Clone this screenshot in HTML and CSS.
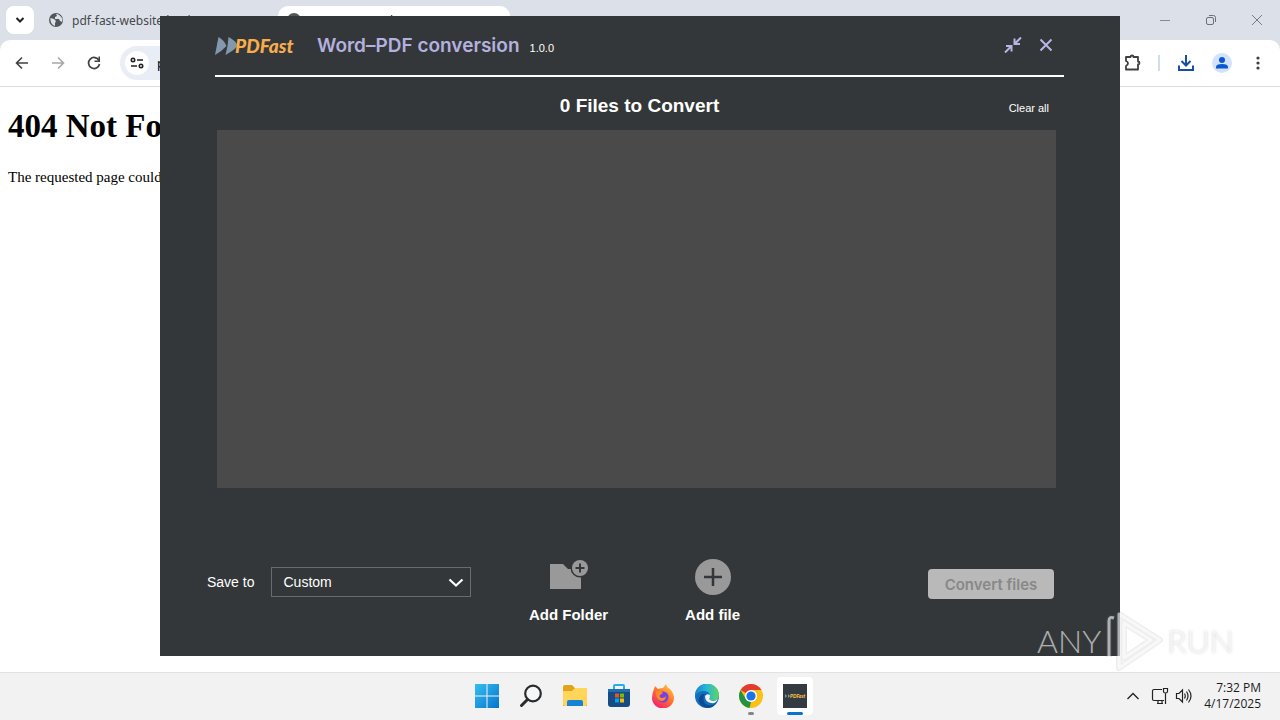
FILE: index.html
```html
<!DOCTYPE html>
<html lang="en">
<head>
<meta charset="utf-8">
<title>Word–PDF conversion</title>
<link rel="stylesheet" href="styles.css">
</head>
<body>
<div class="desktop">
  <div class="browser">
    <div class="tabstrip">
      <button class="tab-search" aria-label="Search tabs"><svg width="10" height="8" viewBox="0 0 10 8"><path d="M1.500 2 5 5.500 8.500 2" fill="none" stroke="#222" stroke-width="2"/></svg></button>
      <div class="tab">
        <svg width="16" height="16" viewBox="0 0 16 16"><circle cx="8" cy="8" r="7" fill="#51565b"/><path d="M2.500 6 6 7l2 2-1 2v3C4 13 2 10 2.500 6ZM8 2l1 2-2 1v2h4l1 2 2 1 .5-3C13 4 11 2 8 2Z" fill="#dce1e9"/></svg>
        <span>pdf-fast-website.b-cdn.net</span>
      </div>
      <div class="tab tab-active">
        <svg width="16" height="16" viewBox="0 0 16 16"><circle cx="8" cy="8" r="7" fill="#51565b"/></svg>
        <span>404 Not Found</span>
      </div>
      <div class="window-buttons">
        <button aria-label="Minimize"><svg width="12" height="12" viewBox="0 0 12 12"><path d="M1 6.500h10" stroke="#858a90"/></svg></button>
        <button aria-label="Restore"><svg width="12" height="12" viewBox="0 0 12 12" fill="none" stroke="#6d7176"><rect x="1.500" y="3.500" width="7" height="7" rx="1.500"/><path d="M4 1.500h4.500a2 2 0 0 1 2 2V8"/></svg></button>
        <button aria-label="Close browser"><svg width="12" height="12" viewBox="0 0 12 12"><path d="m1 1 10 10M11 1 1 11" stroke="#777b80"/></svg></button>
      </div>
    </div>
    <div class="toolbar">
      <button aria-label="Back"><svg width="14" height="14" viewBox="0 0 14 14"><path d="M13 7H2M7 1.500 1.500 7 7 12.500" fill="none" stroke="#3f4144" stroke-width="1.600"/></svg></button>
      <button aria-label="Forward"><svg width="14" height="14" viewBox="0 0 14 14"><path d="M1 7h11M7 1.500 12.500 7 7 12.500" fill="none" stroke="#a5a7aa" stroke-width="1.600"/></svg></button>
      <button aria-label="Reload"><svg width="14" height="14" viewBox="0 0 14 14"><path d="M12 4.500A5.500 5.500 0 1 0 12.500 8" fill="none" stroke="#3f4144" stroke-width="1.700"/><path d="M13 .5V6H7.500V4.500h4V.5Z" fill="#3f4144"/></svg></button>
      <div class="address">
        <button class="site-info" aria-label="Site information"><svg width="14" height="12" viewBox="0 0 14 12" fill="none" stroke="#202124" stroke-width="1.600"><circle cx="3" cy="3" r="1.700"/><path d="M7 3h6M1 9h6"/><circle cx="11" cy="9" r="1.700"/></svg></button>
        <input class="url" type="text" aria-label="Address" value="pdf-fast-website.b-cdn.net">
      </div>
      <div class="toolbar-actions">
        <button aria-label="Extensions"><svg width="18" height="18" viewBox="0 0 18 18"><path d="M3 3H7.500Q7.500 1.500 9 1.500T10.500 3H15V7.500Q16.500 7.500 16.500 9T15 10.500V15.500H3V12Q5 11 5 9.300T3 7Z" fill="none" stroke="#3c3e41" stroke-width="1.800" stroke-linejoin="round"/></svg></button>
        <span class="divider"></span>
        <button aria-label="Downloads"><svg width="18" height="18" viewBox="0 0 18 18"><path d="M9 1v10M4.500 7 9 11.500 13.500 7M2 11.500V16h14v-4.500" fill="none" stroke="#174ea6" stroke-width="2"/></svg></button>
        <button aria-label="Profile"><svg width="20" height="20" viewBox="0 0 20 20"><circle cx="10" cy="10" r="10" fill="#d3e3fd"/><circle cx="10" cy="7" r="3" fill="#0b57d0"/><path d="M4 15.500V14q0-3 6-3t6 3v1.500Z" fill="#0b57d0"/></svg></button>
        <button aria-label="Menu"><svg width="18" height="18" viewBox="0 0 18 18" fill="#3c3e41"><circle cx="9" cy="4" r="1.600"/><circle cx="9" cy="9" r="1.600"/><circle cx="9" cy="14" r="1.600"/></svg></button>
      </div>
    </div>
    <main class="page">
      <h1>404 Not Found</h1>
      <p>The requested page could not be found.</p>
    </main>
  </div>

  <section class="dialog" aria-label="Word–PDF conversion">
    <header class="dialog-header">
      <div class="logo"><svg width="24" height="18" viewBox="0 0 24 18" fill="#8198ad"><path d="M3.500 0Q9 3 11.500 9 7 14 0 18Z"/><path d="M13.500 0Q20 3 23 9 18 14 10.500 18L12.500 9Z"/></svg><span>PDFast</span></div>
      <h2>Word–PDF conversion</h2>
      <span class="version">1.0.0</span>
      <div class="dialog-buttons">
        <button aria-label="Shrink"><svg width="18" height="16" viewBox="0 0 18 16" fill="none" stroke="#b8b4e4" stroke-width="2"><path d="M17 .5 11 6.500M10.500 1.500V7H16M1 15.500 7 9.500M2 9h5.500v5.500"/></svg></button>
        <button aria-label="Close"><svg width="14" height="14" viewBox="0 0 14 14"><path d="m1.500 1.500 11 11M12.500 1.500l-11 11" stroke="#b8b4e4" stroke-width="2"/></svg></button>
      </div>
    </header>
    <div class="list-head">
      <h3>0 Files to Convert</h3>
      <button class="clear">Clear all</button>
    </div>
    <div class="file-list"></div>
    <footer class="dialog-footer">
      <div class="save">
        <label for="save-to">Save to</label>
        <div class="select-wrap">
          <select id="save-to"><option>Custom</option></select>
          <svg class="chevron" width="16" height="10" viewBox="0 0 16 10"><path d="m1.500 1.500 6.500 6 6.500-6" fill="none" stroke="#fff" stroke-width="2.200"/></svg>
        </div>
      </div>
      <div class="adders">
        <button class="adder"><svg width="42" height="36" viewBox="0 0 42 36"><path d="M3 5h13l5 5h3l5 7h5v13H3Z" fill="#999"/><circle cx="33" cy="9" r="9.500" fill="#343739"/><circle cx="33" cy="9" r="8" fill="#999"/><path d="M33 4.500v9M28.500 9h9" stroke="#343739" stroke-width="2"/></svg><span>Add Folder</span></button>
        <button class="adder"><svg width="36" height="36" viewBox="0 0 36 36"><circle cx="18" cy="18" r="18" fill="#999"/><path d="M18 9v18M9 18h18" stroke="#343739" stroke-width="2.500"/></svg><span>Add file</span></button>
      </div>
      <button class="convert" disabled>Convert files</button>
    </footer>
  </section>

  <nav class="taskbar" aria-label="Taskbar">
    <div class="apps">
      <button aria-label="Start"><svg width="24" height="24" viewBox="0 0 24 24"><defs><linearGradient id="win" x2="1" y2="1"><stop stop-color="#35bff2"/><stop offset="1" stop-color="#0873cc"/></linearGradient></defs><path d="M0 0h11.500v11.500H0ZM12.500 0H24v11.500H12.500ZM0 12.500h11.500V24H0ZM12.500 12.500H24V24H12.500Z" fill="url(#win)"/></svg></button>
      <button aria-label="Search"><svg width="24" height="24" viewBox="0 0 24 24"><circle cx="14" cy="9.500" r="7.800" fill="#f5f7f8" stroke="#2b2b2b" stroke-width="2.200"/><path d="m8.500 15.500-6 6" stroke="#2b2b2b" stroke-width="3" stroke-linecap="round"/></svg></button>
      <button aria-label="File Explorer"><svg width="24" height="24" viewBox="0 0 24 24"><path d="M0 3q0-2 2-2h7l3 3h10q2 0 2 2v16H0Z" fill="#e2a31b"/><path d="M0 7h9l3-3h10q2 0 2 2v14q0 2-2 2H2q-2 0-2-2Z" fill="#ffd65a"/><path d="M4 22v-4q0-2 2-2h12q2 0 2 2v4Z" fill="#1683d8"/></svg></button>
      <button aria-label="Store"><svg width="24" height="24" viewBox="0 0 24 24"><path d="M7 6V2q0-1 1-1h8q1 0 1 1v4" fill="none" stroke="#2baee8" stroke-width="2"/><path d="M1 5h22v15q0 3-3 3H4q-3 0-3-3Z" fill="#164b83"/><path d="M1 5h22v3H1Z" fill="#1b6fb4"/><path d="M8 9.500h4v4H8Z" fill="#f25022"/><path d="M13 9.500h4v4h-4Z" fill="#7fba00"/><path d="M8 14.500h4v4H8Z" fill="#00a4ef"/><path d="M13 14.500h4v4h-4Z" fill="#ffb900"/></svg></button>
      <button aria-label="Firefox"><svg width="24" height="24" viewBox="0 0 24 24"><defs><linearGradient id="fox" x1="1" y1="0" x2=".3" y2="1"><stop stop-color="#ffe14a"/><stop offset=".5" stop-color="#ff7a2c"/><stop offset="1" stop-color="#f5216b"/></linearGradient></defs><path d="M3 5 4 2l3 3q3-1 5-1l3-4q1 4 4 5 4 4 4 9a11 10.500 0 0 1-22 0Q1 9 3 5Z" fill="url(#fox)"/><circle cx="12" cy="13" r="5.500" fill="#7542e5"/><path d="M5 8q4-2 7 1l-3 2q-1 3 2 3 3 0 4-2 0 5-5 5-5-1-5-9Z" fill="#ff8b27"/></svg></button>
      <button aria-label="Edge"><svg width="24" height="24" viewBox="0 0 24 24"><defs><linearGradient id="edge" x2="1" y2="0"><stop stop-color="#1686d0"/><stop offset=".5" stop-color="#27b8d6"/><stop offset="1" stop-color="#62d65a"/></linearGradient></defs><circle cx="12" cy="12" r="12" fill="#126fc0"/><path d="M0 12a12 12 0 0 1 24-1c0 5-5 7-9 5-2-1 0-2 0-5C14 6 4 5 0 12Z" fill="url(#edge)"/><path d="M9 11q-2 8 4 10 5 1 8-2-4 7-12 4Q0 18 6 11q2-2 5-1Z" fill="#0c4b94"/><path d="M10 12q2-3 5-1 0 3-1 4 4 4 9 0-2 5-7 4-6-1-6-7Z" fill="#f3f3f3"/></svg></button>
      <button class="running" aria-label="Chrome"><svg width="24" height="24" viewBox="0 0 24 24"><circle cx="12" cy="12" r="12" fill="#fbc116"/><path d="M12 12 1.600 6A12 12 0 0 1 22.400 6H12Z" fill="#e33b2e"/><path d="M1.600 6 6.800 15 12 18l-1.500 5.900A12 12 0 0 1 1.600 6Z" fill="#229342"/><circle cx="12" cy="12" r="6" fill="#fff"/><circle cx="12" cy="12" r="4.600" fill="#1a73e8"/></svg></button>
      <button class="running current" aria-label="PDFast"><svg width="24" height="24" viewBox="0 0 24 24"><path d="M0 0h24v24H0Z" fill="#343b40"/><path d="m2 10 2 2-2 2ZM5 10l2 2-2 2Z" fill="#8198ad"/><text x="7" y="14" class="mini-logo">PDFast</text></svg></button>
    </div>
    <div class="tray">
      <svg width="12" height="8" viewBox="0 0 12 8"><path d="m.5 7 5.500-5.500L11.500 7" fill="none" stroke="#222" stroke-width="1.300"/></svg>
      <svg width="18" height="18" viewBox="0 0 18 18" fill="none" stroke="#222" stroke-width="1.200"><path d="M11 2.500H3q-1.500 0-1.500 1.500v8q0 1.500 1.500 1.500h10M6 16.500h6M7 14v2M11 14v2"/><path d="M12.500 1.500h4v3q0 1.500-2 1.500t-2-1.500ZM14.500 6v11"/></svg>
      <svg width="18" height="16" viewBox="0 0 18 16" fill="none" stroke="#222" stroke-width="1.200"><path d="M1.500 5.500H4L7.500 2v12L4 10.500H1.500ZM9.500 5.500q1.500 2.500 0 5M11.500 3.500q3 4.500 0 9M13.500 1.500q5 6.500 0 13"/></svg>
      <div class="clock"><span>7:32 PM</span><span>4/17/2025</span></div>
    </div>
  </nav>

  <div class="watermark">
    <span>ANY</span>
    <svg width="58" height="64" viewBox="0 0 58 64" fill="none" stroke-linejoin="round"><path d="M4 48V12q0-5 5-3M14 5 55 31 14 59ZM19 14v35L46 31Z" stroke="#777" stroke-opacity=".12" stroke-width="6"/><path d="M4 48V12q0-5 5-3M14 5 55 31 14 59ZM19 14v35L46 31Z" stroke="#fff" stroke-opacity=".6" stroke-width="3"/></svg>
    <span>RUN</span>
  </div>
</div>
</body>
</html>
```
FILE: styles.css
```css
* { box-sizing: border-box; }
body { margin: 0; font-family: "Liberation Sans", sans-serif; }
button { border: 0; padding: 0; background: none; font: inherit; color: inherit; display: flex; align-items: center; justify-content: center; }
svg { display: block; flex: none; }
h1, h2, h3, p { margin: 0; }
.desktop { position: relative; min-height: 100vh; display: flex; flex-direction: column; overflow: hidden; background: #fff; }
.browser { flex: 1; background: #dce1e9; }
.tabstrip { height: 40px; display: flex; align-items: center; padding-left: 6px; font: 12px "Noto Sans", sans-serif; color: #45484c; }
.tab-search { width: 28px; height: 28px; border-radius: 8px; background: #fff; }
.tab { display: flex; align-items: center; gap: 8px; width: 232px; padding-left: 14px; white-space: nowrap; }
.tab-active { align-self: flex-end; height: 34px; margin-left: 12px; padding: 0 0 6px 8px; border-radius: 10px 10px 0 0; background: #fff; color: #202124; }
.window-buttons { margin-left: auto; display: flex; }
.window-buttons button { width: 46px; height: 40px; }
.toolbar { height: 47px; display: flex; align-items: center; gap: 8px; padding: 0 8px; background: #fff; border-bottom: 1px solid #dadce0; border-radius: 10px 10px 0 0; }
.toolbar button { width: 28px; height: 28px; }
.address { flex: 1; display: flex; align-items: center; gap: 6px; height: 34px; padding-left: 5px; border-radius: 17px; background: #e9edf6; margin-left: 4px; }
.toolbar .site-info { width: 24px; height: 24px; border-radius: 50%; background: #fff; }
.url { flex: 1; border: 0; background: none; font: 13px "Noto Sans", sans-serif; }
.toolbar-actions { display: flex; align-items: center; gap: 8px; padding-left: 12px; }
.divider { width: 2px; height: 16px; margin: 0 4px; background: #d3dcef; }
.page { min-height: 585px; padding: 20px 8px; background: #fff; color: #000; font-family: "Liberation Serif", serif; }
.page h1 { font-size: 33px; line-height: 38px; }
.page p { margin-top: 23px; font-size: 15px; line-height: 18px; }

.dialog { position: absolute; top: 16px; bottom: 64px; left: 12.5%; right: 12.5%; display: flex; flex-direction: column; padding: 0 56px 0 55px; background: #343739; color: #fff; }
.dialog-header { height: 61px; display: flex; align-items: center; border-bottom: 2px solid #fff; }
.logo { display: flex; align-items: center; width: 102px; font: italic 900 19px Lato, sans-serif; color: #f8ad4d; }
.logo span { margin-left: -4px; }
.dialog-header h2 { font: 600 19px Inter, sans-serif; color: #b2b1df; }
.version { margin: 4px 0 0 10px; font-size: 11px; }
.dialog-buttons { margin-left: auto; margin-right: 11px; padding-bottom: 2px; display: flex; gap: 17px; }
.list-head { display: grid; grid-template-columns: 1fr auto 1fr; align-items: center; height: 53px; padding-top: 4px; }
.list-head h3 { grid-column: 2; font-size: 19px; line-height: 22px; }
.clear { justify-self: end; margin-right: 15px; padding-top: 4px; font-size: 11px; }
.file-list { flex: 1; margin: 0 8px 0 2px; background: #4a4a4a; }
.dialog-footer { height: 168px; padding-top: 38px; margin: 0 10px 0 -8px; display: grid; grid-template-columns: 1fr auto 1fr; align-items: center; align-content: center; font-size: 14px; }
.save { display: flex; align-items: center; gap: 17px; margin-bottom: 18px; }
.select-wrap { position: relative; width: 200px; }
.select-wrap select { width: 100%; height: 30px; padding: 0 11px; appearance: none; border: 1px solid #696c6e; border-radius: 0; background: #343739; color: #fff; font: inherit; }
.chevron { position: absolute; right: 7px; top: 11px; pointer-events: none; }
.adders { display: flex; gap: 77px; padding-left: 8px; }
.adder { flex-direction: column; gap: 12px; font-size: 15px; font-weight: bold; line-height: 16px; }
.convert { justify-self: end; width: 126px; height: 30px; margin-bottom: 14px; border-radius: 4px; background: #b9b9b9; color: #888; font: 600 15px Inter, sans-serif; }

.taskbar { height: 48px; display: grid; grid-template-columns: 1fr auto 1fr; align-items: center; border-top: 1px solid #e2e2e2; padding-bottom: 1px; background: #f2f2f2; }
.apps { grid-column: 2; display: flex; gap: 8px; padding-left: 2px; }
.apps button { position: relative; width: 36px; height: 38px; border-radius: 4px; }
.apps .current { background: #fff; }
.running::after { content: ""; position: absolute; bottom: 0; width: 6px; height: 3px; border-radius: 2px; background: #858585; }
.apps .current::after { width: 16px; background: #0873cc; }
.mini-logo { font: italic 900 5px Lato, sans-serif; fill: #f8c04d; }
.tray { justify-self: end; display: flex; align-items: center; gap: 6px; padding-right: 19px; font: 12px/16px "Open Sans", sans-serif; color: #1b1b1b; }
.tray > svg:first-child { margin-right: 6px; }
.clock { display: flex; flex-direction: column; align-items: flex-end; padding-left: 5px; }
.watermark { position: absolute; right: 46px; bottom: 47px; display: flex; align-items: center; gap: 4px; font: 300 32px/50px Lato, sans-serif; color: rgba(255,255,255,.6); text-shadow: 0 0 3px rgba(90,90,90,.3); pointer-events: none; }
```
